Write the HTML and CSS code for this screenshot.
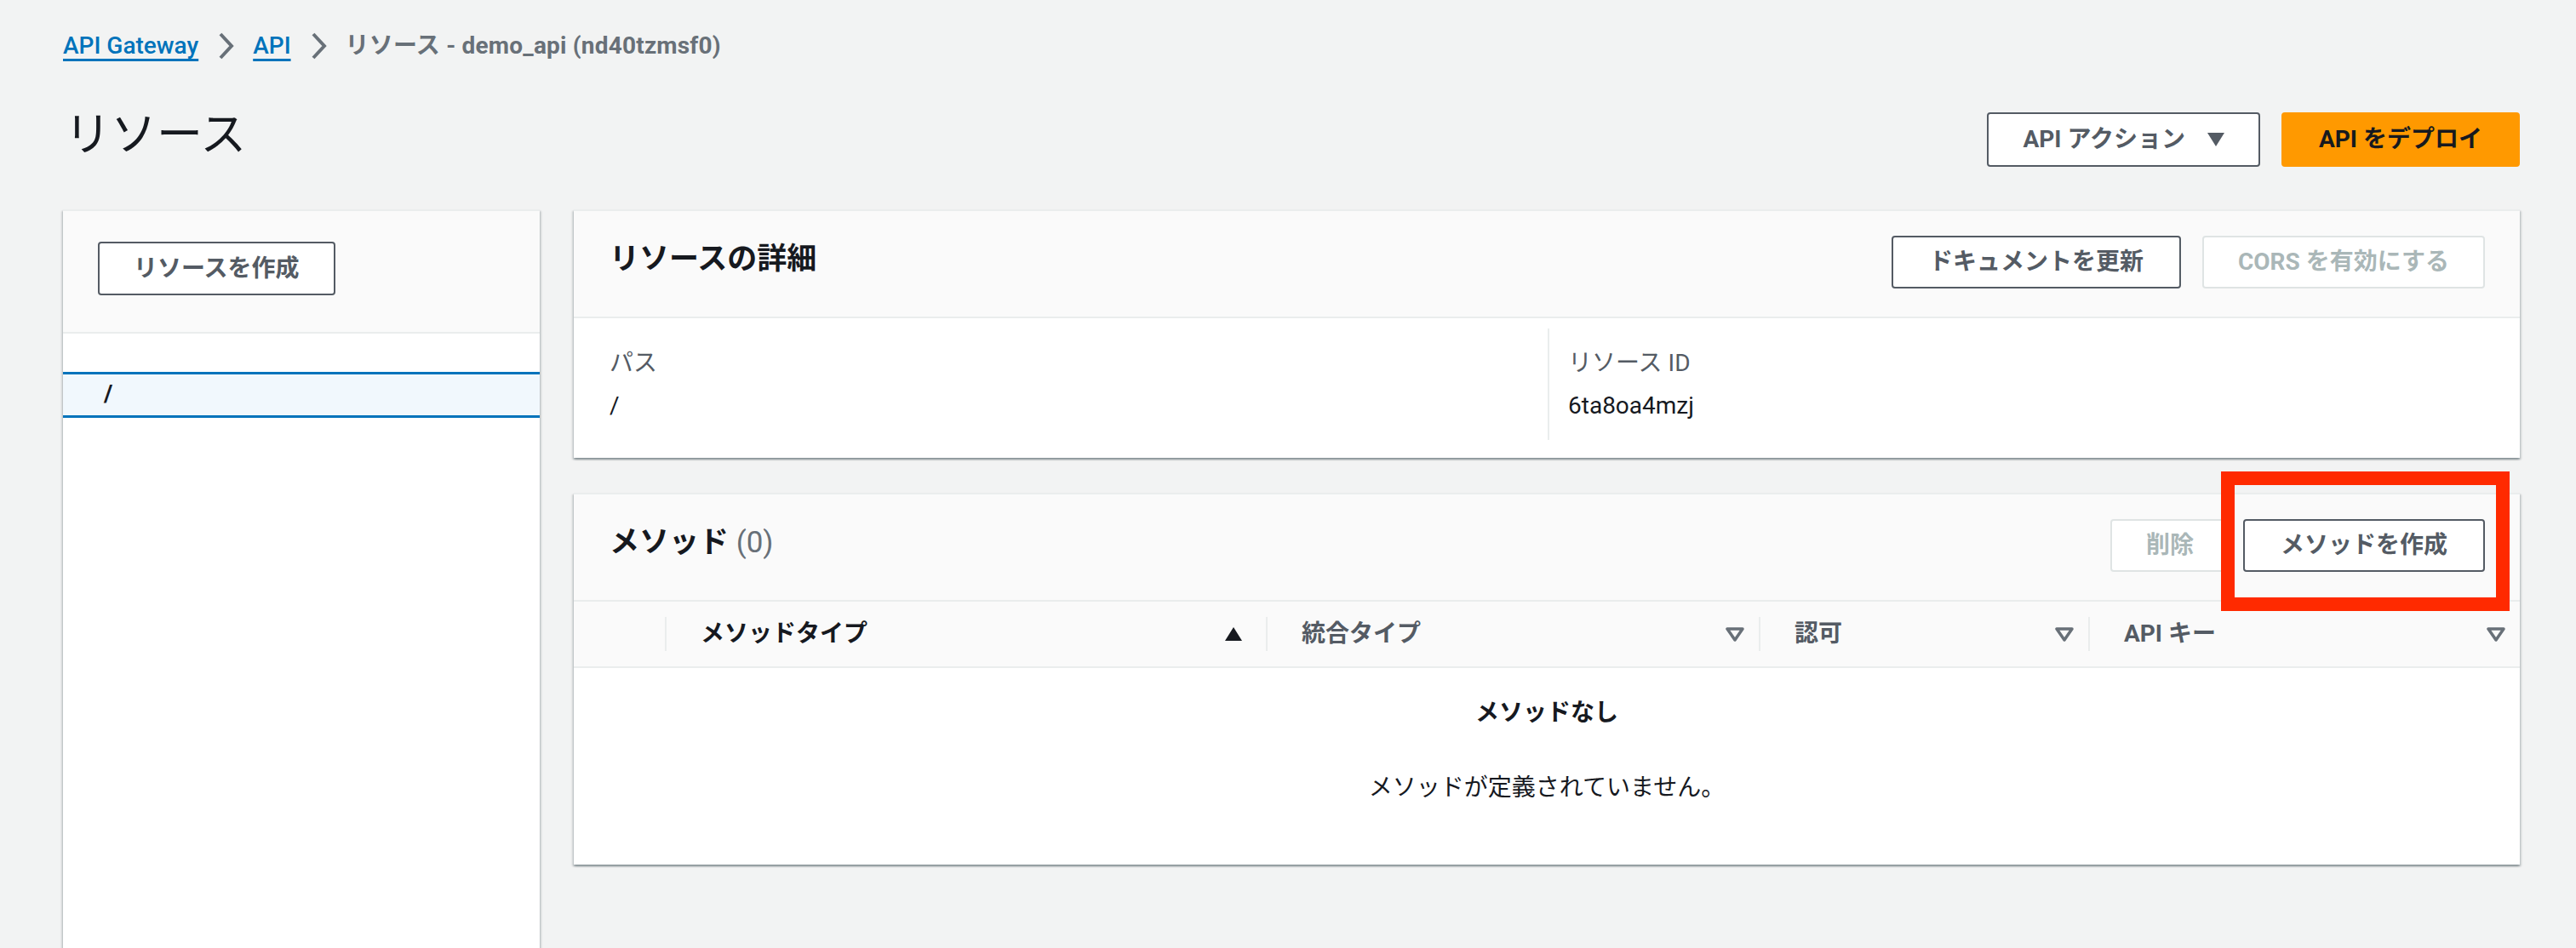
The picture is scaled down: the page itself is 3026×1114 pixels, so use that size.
FILE: index.html
```html
<!DOCTYPE html>
<html lang="ja">
<head>
<meta charset="utf-8">
<title>リソース - API Gateway</title>
<link rel="stylesheet" href="styles.css">
</head>
<body>
<nav class="breadcrumbs">
  <a class="crumb-link" href="#">API Gateway</a>
  <svg class="chev" width="20" height="32" viewBox="0 0 20 32"><polyline points="4,2 17,16 4,30" fill="none" stroke="#687078" stroke-width="4"/></svg>
  <a class="crumb-link" href="#">API</a>
  <svg class="chev" width="20" height="32" viewBox="0 0 20 32"><polyline points="4,2 17,16 4,30" fill="none" stroke="#687078" stroke-width="4"/></svg>
  <span class="crumb-current">リソース - demo_api (nd40tzmsf0)</span>
</nav>

<header class="page-header">
  <h1 class="page-title">リソース</h1>
  <div class="actions">
    <button class="btn btn-normal">API アクション<svg class="caret" width="20" height="16" viewBox="0 0 20 16"><polygon points="0,0 20,0 10,16" fill="#545b64"/></svg></button>
    <button class="btn btn-primary">API をデプロイ</button>
  </div>
</header>

<div class="layout">
  <aside class="panel side">
    <div class="side-head">
      <button class="btn btn-normal">リソースを作成</button>
    </div>
    <div class="tree">
      <div class="tree-row selected">/</div>
    </div>
  </aside>

  <main class="main">
    <section class="panel">
      <div class="panel-head">
        <h2 class="panel-title">リソースの詳細</h2>
        <div class="head-actions">
          <button class="btn btn-normal">ドキュメントを更新</button>
          <button class="btn btn-disabled">CORS を有効にする</button>
        </div>
      </div>
      <div class="kv">
        <div class="kv-col">
          <div class="kv-label">パス</div>
          <div class="kv-value">/</div>
        </div>
        <div class="kv-col kv-col-split">
          <div class="kv-label">リソース ID</div>
          <div class="kv-value">6ta8oa4mzj</div>
        </div>
      </div>
    </section>

    <section class="panel">
      <div class="panel-head">
        <h2 class="panel-title">メソッド <span class="count">(0)</span></h2>
        <div class="head-actions head-actions-tight">
          <button class="btn btn-disabled">削除</button>
          <span class="highlight-wrap">
            <button class="btn btn-normal">メソッドを作成</button>
            <span class="highlight"></span>
          </span>
        </div>
      </div>
      <div class="thead">
        <div class="th th-select"></div>
        <div class="th"><div class="th-inner sorted"><span>メソッドタイプ</span><svg width="20" height="16" viewBox="0 0 20 16"><polygon points="10,0 20,16 0,16" fill="#16191f"/></svg></div></div>
        <div class="th"><div class="th-inner"><span>統合タイプ</span><svg width="22" height="17" viewBox="0 0 22 17"><polygon points="2,2 20,2 11,15" fill="none" stroke="#687078" stroke-width="3.5" stroke-linejoin="round"/></svg></div></div>
        <div class="th"><div class="th-inner"><span>認可</span><svg width="22" height="17" viewBox="0 0 22 17"><polygon points="2,2 20,2 11,15" fill="none" stroke="#687078" stroke-width="3.5" stroke-linejoin="round"/></svg></div></div>
        <div class="th"><div class="th-inner"><span>API キー</span><svg width="22" height="17" viewBox="0 0 22 17"><polygon points="2,2 20,2 11,15" fill="none" stroke="#687078" stroke-width="3.5" stroke-linejoin="round"/></svg></div></div>
      </div>
      <div class="empty">
        <div class="empty-title">メソッドなし</div>
        <div class="empty-text">メソッドが定義されていません。</div>
      </div>
    </section>
  </main>
</div>
</body>
</html>
```

FILE: styles.css
```css
* { box-sizing: border-box; }

html, body {
  margin: 0;
  background: #f2f3f3;
  overflow: hidden;
}

body {
  padding: 0 66px 0 74px;
  font-family: Roboto, "Noto Sans CJK JP", sans-serif;
  font-size: 28px;
  line-height: 42px;
  color: #16191f;
  height: 1114px;
}

/* breadcrumbs */
.breadcrumbs {
  display: flex;
  align-items: center;
  gap: 22px;
  padding-top: 32px;
  height: 76px;
}
.crumb-link {
  color: #0073bb;
  font-weight: 500;
  text-decoration: underline;
  text-decoration-thickness: 3px;
  text-underline-offset: 6px;
}
.crumb-current {
  color: #687078;
  font-weight: 700;
  letter-spacing: 0.2px;
}
.chev { display: block; }

/* page header */
.page-header {
  display: flex;
  justify-content: space-between;
  align-items: center;
  margin-top: 56px;
  height: 64px;
}
.page-title {
  margin: 0 0 10px 2px;
  font-size: 54px;
  line-height: 64px;
  font-weight: 400;
  color: #16191f;
}
.actions {
  display: flex;
  gap: 25px;
}

/* buttons */
.btn {
  font-family: Roboto, "Noto Sans CJK JP", sans-serif;
  font-size: 28px;
  font-weight: 700;
  line-height: 42px;
  height: 63px;
  padding: 0 40px;
  border-radius: 4px;
  border: 2px solid #545b64;
  background: #fff;
  color: #545b64;
  display: inline-flex;
  align-items: center;
  white-space: nowrap;
}
.btn-normal .caret { margin-left: 26px; }
.page-header .btn { height: 64px; }
.btn-primary {
  background: #ff9900;
  border-color: #ff9900;
  color: #16191f;
  padding: 0 42px;
}
.btn-disabled {
  border-color: #dfe4e4;
  color: #aab7b8;
}

/* layout */
.layout {
  display: grid;
  grid-template-columns: 560px 1fr;
  gap: 40px;
  margin-top: 50px;
}

.panel {
  background: #fff;
  box-shadow: 0 2px 2px rgba(0, 28, 36, 0.3), 2px 2px 2px rgba(0, 28, 36, 0.12), -2px 2px 2px rgba(0, 28, 36, 0.12);
  border-top: 2px solid #eaeded;
}

/* side panel */
.side {
  height: 920px;
}
.side-head {
  background: #fafafa;
  padding: 36px 40px 43px 41px;
  border-bottom: 2px solid #eaeded;
}
.tree {
  padding-top: 45px;
}
.tree-row {
  border-top: 3px solid #0073bb;
  border-bottom: 3px solid #0073bb;
  background: #f1f8fd;
  height: 54px;
  line-height: 46px;
  padding-left: 48px;
  font-weight: 700;
}

/* main column */
.main {
  display: flex;
  flex-direction: column;
  gap: 41px;
}

.panel-head {
  display: flex;
  justify-content: space-between;
  align-items: center;
  background: #fafafa;
  padding: 29px 41px 33px 42px;
  border-bottom: 2px solid #eaeded;
}
.panel-title {
  margin: 0;
  font-size: 35px;
  line-height: 42px;
  font-weight: 700;
  margin-bottom: 6px;
}
.count {
  color: #687078;
  font-weight: 400;
}
.head-actions {
  display: flex;
  gap: 25px;
  align-items: center;
}
.head-actions-tight { gap: 16px; }
.head-actions .btn { height: 62px; }
.head-actions .btn-normal:first-child { padding: 0 42px; }

/* key-value */
.kv {
  display: grid;
  grid-template-columns: 1fr 1fr;
  padding: 12px 40px 21px 42px;
}
.kv-col {
  padding: 20px 0 19px;
}
.kv-col-split {
  border-left: 2px solid #eaeded;
  padding-left: 22px;
}
.kv-label {
  color: #545b64;
  line-height: 42px;
}
.kv-value {
  margin-top: 8px;
  line-height: 42px;
}

/* table header */
.thead {
  display: grid;
  grid-template-columns: 107px 706px 579px 387px 1fr;
  height: 78px;
  background: #fafafa;
  border-bottom: 2px solid #eaeded;
  align-items: center;
}
.th-inner {
  display: flex;
  justify-content: space-between;
  align-items: center;
  height: 40px;
  border-left: 2px solid #eaeded;
  padding: 0 17px 0 40px;
  font-weight: 700;
  color: #545b64;
}
.th-inner.sorted { color: #16191f; padding-right: 28px; }
.th-inner svg { display: block; }

/* empty */
.empty {
  text-align: center;
  padding: 32px 0 69px;
}
.empty-title {
  font-weight: 700;
}
.empty-text {
  margin-top: 46px;
}

/* annotation */
.highlight-wrap {
  position: relative;
  display: inline-flex;
}
.highlight {
  position: absolute;
  left: -26px;
  right: -29px;
  top: -56px;
  bottom: -46px;
  border: 16px solid #ff2a00;
  pointer-events: none;
}
```
